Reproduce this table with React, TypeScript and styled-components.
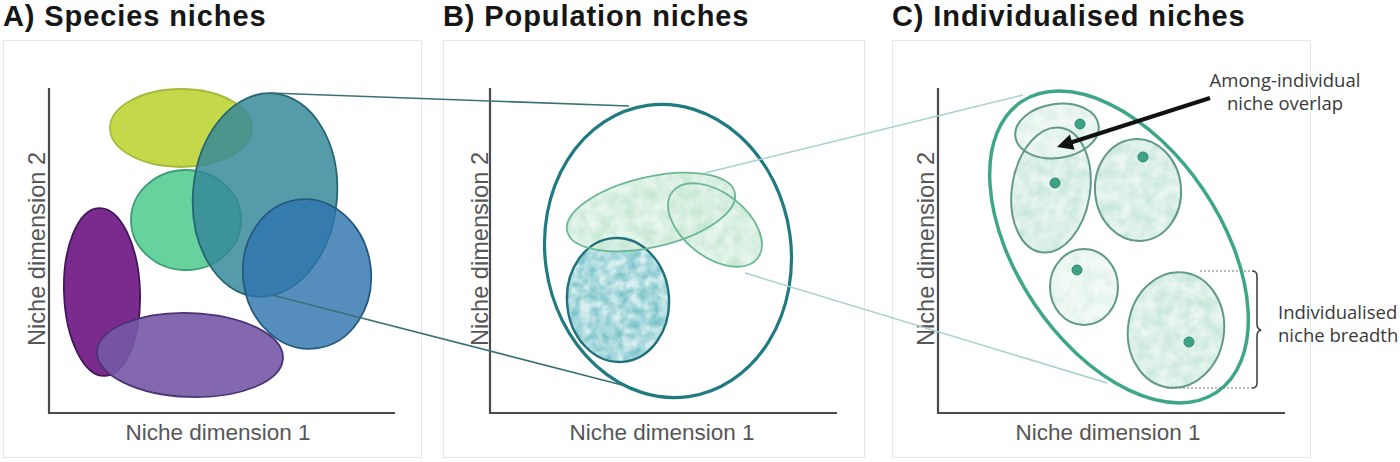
import React from "react";
import styled, { createGlobalStyle } from "styled-components";

type Ell = {
  cx: number;
  cy: number;
  rx: number;
  ry: number;
  rot?: number;
};

type Blob = Ell & {
  fill: string;
  stroke: string;
  opacity?: number;
};

type Niche = Ell & {
  texture: string;
  base: string;
  dot?: [number, number];
};

const GlobalStyle = createGlobalStyle`
  html, body {
    margin: 0;
    padding: 0;
    background: #fff;
    overflow: hidden;
  }
  body {
    font-family: "Liberation Sans", Arial, sans-serif;
  }
`;

const Figure = styled.div`
  position: relative;
  width: 1400px;
  height: 462px;
  display: flex;
  align-items: flex-start;
  padding-left: 3px;
  box-sizing: border-box;
`;

const Panel = styled.section<{ $width: number; $gap: number }>`
  flex: none;
  width: ${(p) => p.$width}px;
  margin-left: ${(p) => p.$gap}px;
  display: flex;
  flex-direction: column;
`;

const Title = styled.h2`
  margin: 0 0 7px 0;
  font: bold 29px/33px "Liberation Sans", Arial, sans-serif;
  letter-spacing: 0.9px;
  color: #161616;
  white-space: nowrap;
`;

const PlotBox = styled.div`
  height: 418px;
  border: 1px solid #e7e7e7;
  box-sizing: border-box;
  background: #fff;

  svg {
    display: block;
    width: 100%;
    height: 100%;
    overflow: visible;
  }
`;

const AxisText = styled.text<{ $size: number }>`
  font-family: "Liberation Sans", Arial, sans-serif;
  font-size: ${(p) => p.$size}px;
  fill: #565656;
`;

const Overlay = styled.svg`
  position: absolute;
  left: 0;
  top: 0;
  width: 1400px;
  height: 462px;
  pointer-events: none;
`;

const Note = styled.div<{ $left: number; $top: number; $width: number; $align: string }>`
  position: absolute;
  left: ${(p) => p.$left}px;
  top: ${(p) => p.$top}px;
  width: ${(p) => p.$width}px;
  text-align: ${(p) => p.$align};
  font: 18.5px/23px "Open Sans", "Noto Sans", sans-serif;
  color: #3a3a3a;
  white-space: nowrap;
`;

const hexToRgb = (hex: string) => {
  const n = parseInt(hex.slice(1), 16);
  return [(n >> 16) & 255, (n >> 8) & 255, n & 255].map((v) => (v / 255).toFixed(3));
};

const rot = (e: Ell) => (e.rot ? `rotate(${e.rot} ${e.cx} ${e.cy})` : undefined);

const Mottle = ({
  id,
  color,
  seed,
  freq = 0.07,
  gain = 1.7,
  bias = -0.5,
}: {
  id: string;
  color: string;
  seed: number;
  freq?: number;
  gain?: number;
  bias?: number;
}) => {
  const [r, g, b] = hexToRgb(color);
  return (
    <filter id={id} x="0" y="0" width="1" height="1" colorInterpolationFilters="sRGB">
      <feTurbulence type="fractalNoise" baseFrequency={freq} numOctaves={3} seed={seed} result="noise" />
      <feColorMatrix
        in="noise"
        type="matrix"
        values={`0 0 0 0 ${r}  0 0 0 0 ${g}  0 0 0 0 ${b}  ${gain} 0 0 0 ${bias}`}
        result="tint"
      />
      <feComposite in="tint" in2="SourceGraphic" operator="in" result="spots" />
      <feMerge>
        <feMergeNode in="SourceGraphic" />
        <feMergeNode in="spots" />
      </feMerge>
    </filter>
  );
};

const Axes = ({ x, end, labelX, yLabelX }: { x: number; end: number; labelX: number; yLabelX: number }) => (
  <g>
    <path d={`M${x} 88 V413 H${end}`} fill="none" stroke="#4b4b4b" strokeWidth={2.2} />
    <AxisText $size={22.5} x={labelX} y={440} textAnchor="middle">
      Niche dimension 1
    </AxisText>
    <AxisText
      $size={23.6}
      x={yLabelX}
      y={249}
      textAnchor="middle"
      transform={`rotate(-90 ${yLabelX} 249)`}
    >
      Niche dimension 2
    </AxisText>
  </g>
);

const speciesNiches: Blob[] = [
  { cx: 181, cy: 128, rx: 71, ry: 39, fill: "#c4d84a", stroke: "#a3bb3c" },
  { cx: 186, cy: 220, rx: 55, ry: 50, fill: "#66d29e", stroke: "#3c9c76" },
  { cx: 102, cy: 292, rx: 38, ry: 84, rot: -2, fill: "#7a2b8d", stroke: "#42165a" },
  { cx: 190, cy: 355, rx: 93, ry: 42, rot: 2, fill: "#7758a6", stroke: "#4a3474", opacity: 0.9 },
  { cx: 265, cy: 195, rx: 72, ry: 102, rot: 5, fill: "#34889a", stroke: "#266670", opacity: 0.84 },
  { cx: 307, cy: 274, rx: 64, ry: 75, rot: -7, fill: "#2f74ae", stroke: "#27597e", opacity: 0.82 },
];

const populationNiches: (Niche & { stroke: string })[] = [
  { cx: 618, cy: 300, rx: 51, ry: 62, rot: -4, texture: "spotTeal", base: "#d9eff1", stroke: "#21717a" },
  { cx: 651, cy: 212, rx: 86, ry: 35, rot: -13, texture: "spotMint", base: "#e4f4ea", stroke: "#6db797" },
  { cx: 715, cy: 225, rx: 54, ry: 32, rot: 38, texture: "spotMint", base: "#e4f4ea", stroke: "#6db797" },
];

const individualNiches: Niche[] = [
  { cx: 1051, cy: 190, rx: 39, ry: 63, rot: 9, texture: "spotSea", base: "#eaf6f1", dot: [1055, 183] },
  { cx: 1057, cy: 131, rx: 42, ry: 27, rot: -8, texture: "spotPale", base: "#f0f8f4", dot: [1080, 124] },
  { cx: 1138, cy: 190, rx: 43, ry: 51, rot: -5, texture: "spotSea", base: "#eaf6f1", dot: [1143, 157] },
  { cx: 1084, cy: 287, rx: 34, ry: 38, texture: "spotPale", base: "#f3faf6", dot: [1077, 270] },
  { cx: 1176, cy: 330, rx: 48, ry: 58, rot: 8, texture: "spotSea", base: "#eaf6f1", dot: [1189, 342] },
];

const view = (x0: number, w: number) => `${x0 + 1} 41 ${w - 2} 416`;

const SpeciesPlot = () => (
  <svg viewBox={view(3, 419)}>
    {speciesNiches.map((e, i) => (
      <ellipse
        key={i}
        cx={e.cx}
        cy={e.cy}
        rx={e.rx}
        ry={e.ry}
        transform={rot(e)}
        fill={e.fill}
        fillOpacity={e.opacity ?? 1}
        stroke={e.stroke}
        strokeWidth={1.8}
      />
    ))}
    <Axes x={49} end={395} labelX={218} yLabelX={45} />
  </svg>
);

const PopulationPlot = () => (
  <svg viewBox={view(443, 422)}>
    <defs>
      <Mottle id="spotTeal" color="#5db6be" seed={4} freq={0.1} gain={1.45} bias={-0.36} />
      <Mottle id="spotMint" color="#b4dfc4" seed={9} freq={0.08} gain={1.4} bias={-0.38} />
    </defs>
    {populationNiches.map((e, i) => (
      <ellipse
        key={`f${i}`}
        cx={e.cx}
        cy={e.cy}
        rx={e.rx}
        ry={e.ry}
        transform={rot(e)}
        fill={e.base}
        fillOpacity={i === 0 ? 1 : 0.85}
        filter={`url(#${e.texture})`}
      />
    ))}
    {populationNiches.map((e, i) => (
      <ellipse
        key={`s${i}`}
        cx={e.cx}
        cy={e.cy}
        rx={e.rx}
        ry={e.ry}
        transform={rot(e)}
        fill="none"
        stroke={e.stroke}
        strokeWidth={i === 0 ? 2.4 : 1.8}
      />
    ))}
    <ellipse cx={668} cy={251} rx={123} ry={147} transform="rotate(-8 668 251)" fill="none" stroke="#1f7b80" strokeWidth={3.2} />
    <Axes x={490} end={837} labelX={662} yLabelX={488} />
  </svg>
);

const IndividualPlot = () => (
  <svg viewBox={view(892, 419)}>
    <defs>
      <Mottle id="spotSea" color="#bde2d4" seed={2} freq={0.085} gain={1.35} bias={-0.36} />
      <Mottle id="spotPale" color="#d0ebe1" seed={7} freq={0.085} gain={1.2} bias={-0.4} />
    </defs>
    {individualNiches.map((e, i) => (
      <ellipse
        key={`f${i}`}
        cx={e.cx}
        cy={e.cy}
        rx={e.rx}
        ry={e.ry}
        transform={rot(e)}
        fill={e.base}
        filter={`url(#${e.texture})`}
      />
    ))}
    {individualNiches.map((e, i) => (
      <ellipse
        key={`s${i}`}
        cx={e.cx}
        cy={e.cy}
        rx={e.rx}
        ry={e.ry}
        transform={rot(e)}
        fill="none"
        stroke="#62998b"
        strokeWidth={2}
      />
    ))}
    {individualNiches.map((e, i) =>
      e.dot ? <circle key={`d${i}`} cx={e.dot[0]} cy={e.dot[1]} r={5} fill="#3ea386" stroke="#2f8a70" strokeWidth={1} /> : null
    )}
    <ellipse cx={1119} cy={247} rx={102} ry={175} transform="rotate(-34 1119 247)" fill="none" stroke="#3ea688" strokeWidth={3.5} />

    {/* breadth bracket */}
    <path d="M1200 271 H1252 M1167 388 H1252" stroke="#777" strokeWidth={1.2} strokeDasharray="2 2" fill="none" />
    <path
      d="M1252 271 Q1257 271 1257 276 V324 Q1257 329 1261 330 Q1257 331 1257 336 V383 Q1257 388 1252 388"
      fill="none"
      stroke="#444"
      strokeWidth={1.6}
    />

    {/* overlap arrow */}
    <line x1={1210} y1={98} x2={1071} y2={142.5} stroke="#111" strokeWidth={4} />
    <polygon points="1057,147 1074.6,149.7 1069.8,134.5" fill="#111" />

    <Axes x={938} end={1285} labelX={1108} yLabelX={934} />
  </svg>
);

export default function App() {
  return (
    <>
      <GlobalStyle />
      <Figure>
        <Panel $width={419} $gap={0}>
          <Title>A) Species niches</Title>
          <PlotBox>
            <SpeciesPlot />
          </PlotBox>
        </Panel>
        <Panel $width={422} $gap={21}>
          <Title>B) Population niches</Title>
          <PlotBox>
            <PopulationPlot />
          </PlotBox>
        </Panel>
        <Panel $width={419} $gap={27}>
          <Title>C) Individualised niches</Title>
          <PlotBox>
            <IndividualPlot />
          </PlotBox>
        </Panel>

        <Overlay viewBox="0 0 1400 462">
          <line x1={270} y1={93} x2={629} y2={106} stroke="#3a7177" strokeWidth={1.6} />
          <line x1={272} y1={295} x2={622} y2={385} stroke="#3a7177" strokeWidth={1.6} />
          <line x1={705} y1={173} x2={1023} y2={95} stroke="#a6d0cf" strokeWidth={1.5} />
          <line x1={745} y1={273} x2={1107} y2={383} stroke="#a6d0cf" strokeWidth={1.5} />
        </Overlay>

        <Note $left={1205} $top={68} $width={160} $align="center">
          Among-individual
          <br />
          niche overlap
        </Note>
        <Note $left={1278} $top={300} $width={130} $align="left">
          Individualised
          <br />
          niche breadth
        </Note>
      </Figure>
    </>
  );
}
